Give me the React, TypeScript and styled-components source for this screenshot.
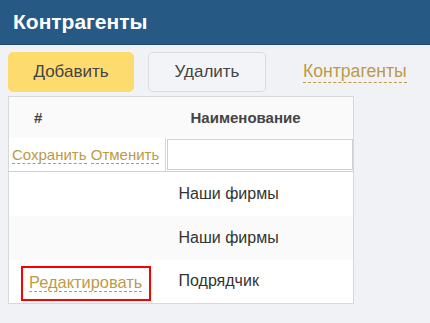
import styled, { createGlobalStyle } from 'styled-components';

const GlobalStyle = createGlobalStyle`
  html, body {
    margin: 0;
    padding: 0;
    background: #f1f2f6;
    font-family: "Liberation Sans", Arial, sans-serif;
  }
`;

const Page = styled.div`
  width: 430px;
  height: 323px;
  overflow: hidden;
  background: #f1f2f6;
`;

const Header = styled.header`
  height: 44px;
  background: #275985;
  border-bottom: 1px solid #1f4a70;
  display: flex;
  align-items: center;
  padding-left: 13px;
`;

const Title = styled.h1`
  margin: 0;
  font-size: 21px;
  font-weight: 700;
  color: #ffffff;
`;

const Toolbar = styled.div`
  display: flex;
  align-items: center;
  padding: 7px 8px 4px;
  gap: 14px;
`;

const Button = styled.button<{ $primary?: boolean }>`
  height: 40px;
  width: ${({ $primary }) => ($primary ? '126px' : '118px')};
  border-radius: 5px;
  border: 1px solid ${({ $primary }) => ($primary ? '#fddb6e' : '#dcdcdc')};
  background: ${({ $primary }) => ($primary ? '#fddb6e' : '#f3f4f7')};
  color: #444444;
  font-family: inherit;
  font-size: 17px;
  cursor: pointer;
  padding: 0;
`;

const DashedLink = styled.span`
  color: #bd9a48;
  border-bottom: 1px dashed #bd9a48;
  cursor: pointer;
  line-height: 1.15;
`;

const ToolbarLink = styled(DashedLink)`
  font-size: 17.6px;
  margin-left: 23px;
`;

const Table = styled.table`
  margin-left: 8px;
  width: 346px;
  border-collapse: collapse;
  border: 1px solid #d8d8d8;
  background: #ffffff;
  table-layout: fixed;
  font-size: 16px;
  color: #333333;
`;

const HeadCell = styled.th`
  height: 41px;
  padding: 0 0 0 25px;
  text-align: left;
  font-size: 15px;
  font-weight: 700;
  color: #444444;
  background: #fafafa;
`;

const EditRow = styled.tr`
  border-bottom: 1px solid #cfcfcf;
`;

const ActionsCell = styled.td`
  height: 32px;
  padding: 0 0 0 3px;
  border-right: 1px solid #d6d6d6;
  font-size: 15px;
  white-space: nowrap;
`;

const InputCell = styled.td`
  padding: 1px 0 1px 1px;
`;

const Input = styled.input`
  display: block;
  box-sizing: border-box;
  width: 186px;
  height: 31px;
  border: 1px solid #d0d0d0;
  margin: 0;
`;

const Row = styled.tr<{ $striped?: boolean }>`
  height: 44px;
  background: ${({ $striped }) => ($striped ? '#fafafa' : '#ffffff')};
`;

const Cell = styled.td`
  padding: 0 0 0 13px;
`;

const EditCell = styled.td`
  padding: 4px 0 0 12px;
`;

const Highlight = styled.span`
  display: inline-block;
  border: 2px solid #ff0000;
  padding: 5px 7px 7px 6px;
  font-size: 16.4px;
`;

const rows = [
  { id: 1, name: 'Наши фирмы' },
  { id: 2, name: 'Наши фирмы' },
  { id: 3, name: 'Подрядчик', editable: true },
];

export default function App() {
  return (
    <Page>
      <GlobalStyle />
      <Header>
        <Title>Контрагенты</Title>
      </Header>
      <Toolbar>
        <Button $primary>Добавить</Button>
        <Button>Удалить</Button>
        <ToolbarLink>Контрагенты</ToolbarLink>
      </Toolbar>
      <Table>
        <colgroup>
          <col style={{ width: 157 }} />
          <col />
        </colgroup>
        <thead>
          <tr>
            <HeadCell>#</HeadCell>
            <HeadCell>Наименование</HeadCell>
          </tr>
        </thead>
        <tbody>
          <EditRow>
            <ActionsCell>
              <DashedLink>Сохранить</DashedLink> <DashedLink>Отменить</DashedLink>
            </ActionsCell>
            <InputCell>
              <Input />
            </InputCell>
          </EditRow>
          {rows.map((row, i) => (
            <Row key={row.id} $striped={i % 2 === 1}>
              {row.editable ? (
                <EditCell>
                  <Highlight>
                    <DashedLink>Редактировать</DashedLink>
                  </Highlight>
                </EditCell>
              ) : (
                <Cell />
              )}
              <Cell>{row.name}</Cell>
            </Row>
          ))}
        </tbody>
      </Table>
    </Page>
  );
}
